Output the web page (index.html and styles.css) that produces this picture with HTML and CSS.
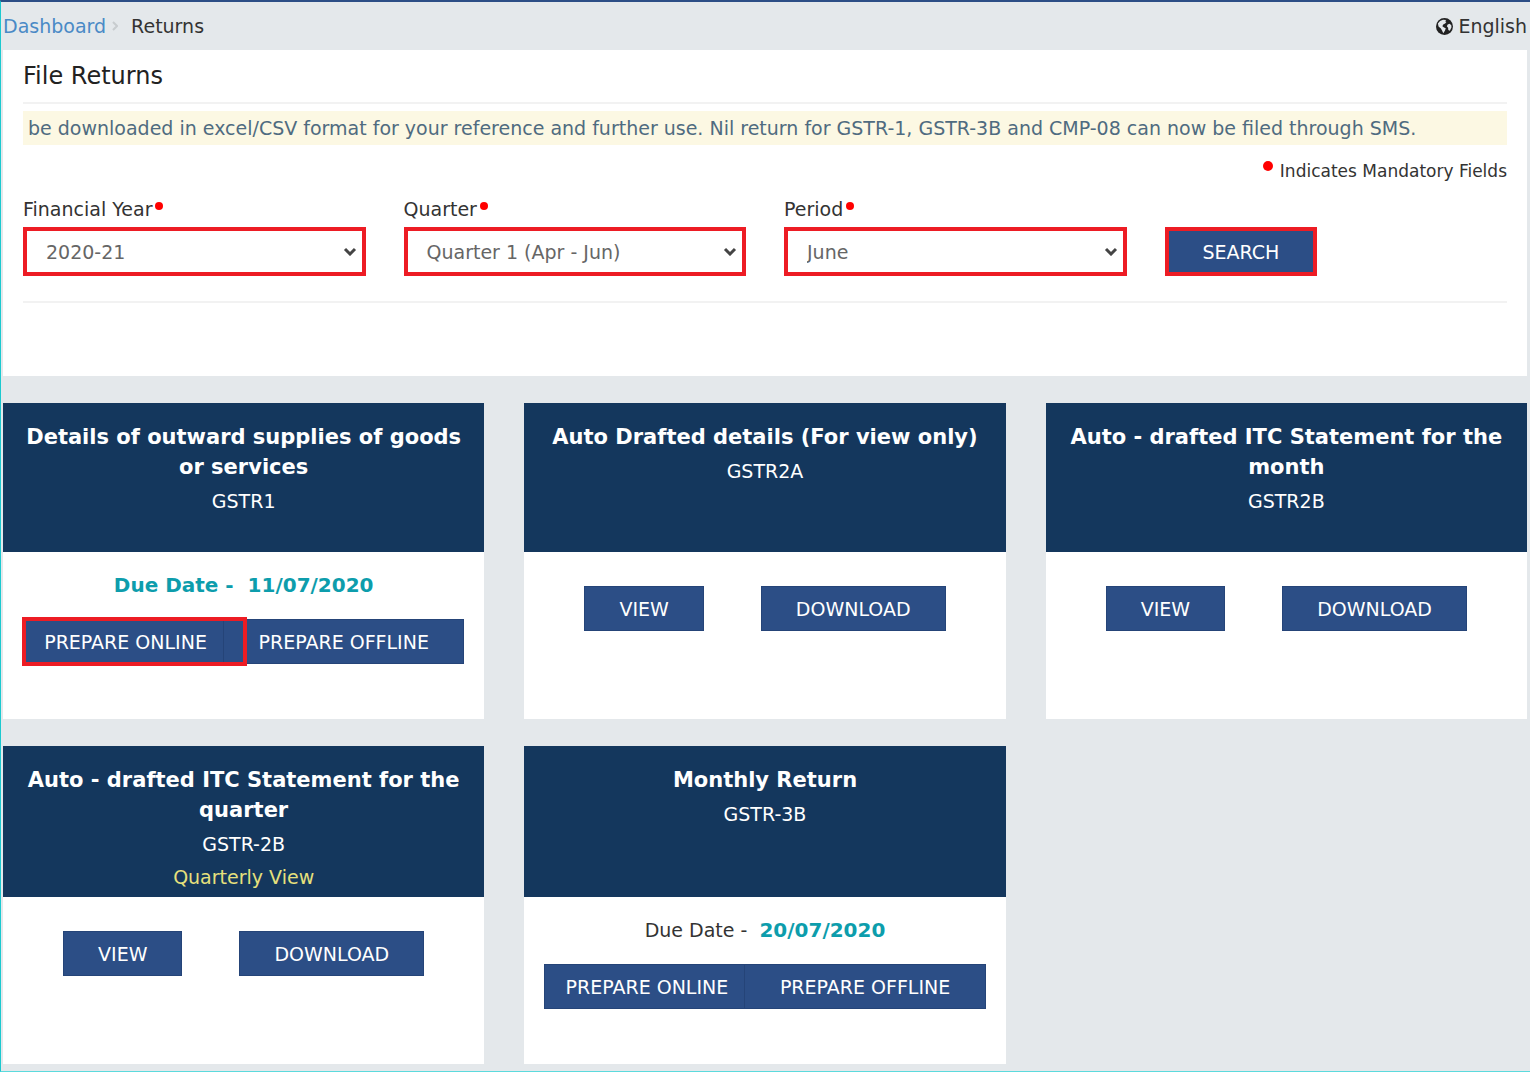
FILE: index.html
```html
<!DOCTYPE html>
<html lang="en">
<head>
<meta charset="utf-8">
<meta name="viewport" content="width=device-width, initial-scale=1">
<title>File Returns</title>
<link rel="stylesheet" href="styles.css">
</head>
<body>
<div class="page">
  <header class="topbar">
    <nav class="breadcrumb" aria-label="Breadcrumb">
      <a href="#">Dashboard</a>
      <svg class="crumb-sep" viewBox="0 0 6 10" aria-hidden="true"><path d="M1 1l4 4-4 4"/></svg>
      <span>Returns</span>
    </nav>
    <div class="language">
      <svg class="globe" viewBox="0 0 16 16" aria-hidden="true">
        <circle cx="8" cy="8" r="8" fill="#222"/>
        <path fill="#e4e8eb" d="M1.800 5.200Q3.400 2.200 6.600 1.600L9.600 1.800 8.600 3 9.800 3.800 8.600 5.200 6.800 6 6 7.800 7.600 9 9.200 9.600 8.400 12 6.800 14.400 5.800 12 4.600 9.800 2.400 8zM11 6.200l1.800-.8 1.600 1.400.2 2-1.600 3.200-1.400-.8-.2-2-1.200-1.400z"/>
      </svg>
      <span>English</span>
    </div>
  </header>

  <main>
    <section class="panel">
      <h1 class="panel-title">File Returns</h1>
      <p class="notice">be downloaded in excel/CSV format for your reference and further use. Nil return for GSTR-1, GSTR-3B and CMP-08 can now be filed through SMS.</p>
      <p class="mandatory"><span class="dot"></span>Indicates Mandatory Fields</p>
      <form class="filters">
        <div class="field">
          <label for="year">Financial Year<span class="dot"></span></label>
          <div class="select-box">
            <select id="year"><option>2020-21</option></select>
            <svg class="chevron" viewBox="0 0 14 9" aria-hidden="true"><path d="M2 2l5 5 5-5"/></svg>
          </div>
        </div>
        <div class="field">
          <label for="quarter">Quarter<span class="dot"></span></label>
          <div class="select-box">
            <select id="quarter"><option>Quarter 1 (Apr - Jun)</option></select>
            <svg class="chevron" viewBox="0 0 14 9" aria-hidden="true"><path d="M2 2l5 5 5-5"/></svg>
          </div>
        </div>
        <div class="field">
          <label for="period">Period<span class="dot"></span></label>
          <div class="select-box">
            <select id="period"><option>June</option></select>
            <svg class="chevron" viewBox="0 0 14 9" aria-hidden="true"><path d="M2 2l5 5 5-5"/></svg>
          </div>
        </div>
        <button class="btn search" type="button">SEARCH</button>
      </form>
    </section>

    <section class="cards">
      <article class="card">
        <header class="card-head">
          <h2>Details of outward supplies of goods or services</h2>
          <p>GSTR1</p>
        </header>
        <div class="card-body dated">
          <p class="due strong">Due Date - &nbsp;<b>11/07/2020</b></p>
          <div class="group marked">
            <button class="btn online" type="button">PREPARE ONLINE</button>
            <button class="btn offline" type="button">PREPARE OFFLINE</button>
          </div>
        </div>
      </article>
      <article class="card">
        <header class="card-head">
          <h2>Auto Drafted details (For view only)</h2>
          <p>GSTR2A</p>
        </header>
        <div class="card-body">
          <div class="pair">
            <button class="btn" type="button">VIEW</button>
            <button class="btn" type="button">DOWNLOAD</button>
          </div>
        </div>
      </article>
      <article class="card">
        <header class="card-head">
          <h2>Auto - drafted ITC Statement for the month</h2>
          <p>GSTR2B</p>
        </header>
        <div class="card-body">
          <div class="pair">
            <button class="btn" type="button">VIEW</button>
            <button class="btn" type="button">DOWNLOAD</button>
          </div>
        </div>
      </article>
      <article class="card">
        <header class="card-head">
          <h2>Auto - drafted ITC Statement for the quarter</h2>
          <p>GSTR-2B</p>
          <p class="quarterly">Quarterly View</p>
        </header>
        <div class="card-body">
          <div class="pair">
            <button class="btn" type="button">VIEW</button>
            <button class="btn" type="button">DOWNLOAD</button>
          </div>
        </div>
      </article>
      <article class="card">
        <header class="card-head">
          <h2>Monthly Return</h2>
          <p>GSTR-3B</p>
        </header>
        <div class="card-body dated">
          <p class="due">Due Date - &nbsp;<b>20/07/2020</b></p>
          <div class="group">
            <button class="btn online" type="button">PREPARE ONLINE</button>
            <button class="btn offline" type="button">PREPARE OFFLINE</button>
          </div>
        </div>
      </article>
    </section>
  </main>
</div>
</body>
</html>
```
FILE: styles.css
```css
*,
*::after {
  box-sizing: border-box;
}

body {
  margin: 0;
  background: #fff;
  color: #333;
  font-family: Verdana, "DejaVu Sans", sans-serif;
  font-size: 19px;
  line-height: 28px;
}

h1, h2, p {
  margin: 0;
}

.page {
  padding: 0 3px 7px 2px;
  background: #e4e8eb;
  border-top: 2px solid #2c4e86;
  border-left: 1px solid #1cc9cf;
  border-bottom: 1px solid #5cdadd;
}

.topbar {
  display: flex;
  justify-content: space-between;
  align-items: center;
  height: 48px;
}

.breadcrumb {
  display: flex;
  align-items: center;
}

.breadcrumb a {
  color: #4a8ac6;
  text-decoration: none;
}

.crumb-sep {
  width: 6px;
  height: 10px;
  margin: 0 13px 0 6px;
  fill: none;
  stroke: #c8cccf;
  stroke-width: 2;
}

.language {
  display: flex;
  align-items: center;
  gap: 5px;
}

.globe {
  width: 17px;
  height: 17px;
}

.panel {
  padding: 12px 20px 73px;
  background: #fff;
}

.panel-title {
  padding-bottom: 12px;
  border-bottom: 2px solid #f2f2f2;
  color: #222;
  font-size: 24px;
  font-weight: 400;
  line-height: 28px;
}

.notice {
  margin-top: 7px;
  padding: 3px 5px;
  overflow: hidden;
  background: #fcf8e3;
  color: #4f6b80;
  white-space: nowrap;
}

.mandatory {
  margin-top: 12px;
  font-size: 17px;
  text-align: right;
}

.dot {
  display: inline-block;
  width: 8px;
  height: 8px;
  margin-left: 3px;
  border-radius: 50%;
  background: #f00;
  vertical-align: 6px;
}

.mandatory .dot {
  width: 10px;
  height: 10px;
  margin-right: 7px;
}

.filters {
  display: grid;
  grid-template-columns: repeat(4, 1fr);
  gap: 38px;
  align-items: end;
  padding: 10px 0 25px;
  border-bottom: 2px solid #f2f2f2;
}

.field label {
  display: block;
  margin-bottom: 4px;
}

.select-box {
  display: grid;
  align-items: center;
}

.select-box > * {
  grid-area: 1 / 1;
}

select {
  width: 100%;
  height: 49px;
  padding: 0 19px;
  border: 4px solid #ed1c24;
  border-radius: 0;
  background: #fff;
  color: #666;
  font: inherit;
  appearance: none;
}

.chevron {
  justify-self: end;
  width: 14px;
  height: 9px;
  margin-right: 9px;
  fill: none;
  stroke: #444;
  stroke-width: 3;
  pointer-events: none;
}

.btn {
  height: 45px;
  padding: 0 34px;
  border: 1px solid #254478;
  background: #2c4e86;
  color: #fff;
  font: inherit;
}

.search {
  justify-self: start;
  height: 49px;
  border: 4px solid #ed1c24;
}

.cards {
  display: grid;
  grid-template-columns: repeat(3, 1fr);
  gap: 27px 40px;
  margin-top: 27px;
}

.card {
  display: flex;
  flex-direction: column;
  background: #fff;
}

.card-head {
  min-height: 149px;
  padding: 19px 20px 4px;
  background: #14375d;
  color: #fff;
  text-align: center;
}

.cards .card:nth-child(n + 4) .card-head {
  min-height: 151px;
}

.card-head h2 {
  margin-bottom: 5px;
  font-size: 21px;
  line-height: 30px;
}

.card-head .quarterly {
  margin-top: 5px;
  color: #e6e07c;
}

.card-body {
  min-height: 167px;
  padding: 34px 20px;
}

.card-body.dated {
  padding-top: 19px;
}

.due {
  margin-bottom: 20px;
  text-align: center;
}

.due b,
.due.strong {
  color: #0d9dac;
  font-size: 20px;
  font-weight: 700;
}

.pair {
  display: flex;
  justify-content: center;
  gap: 57px;
}

.group {
  position: relative;
  display: grid;
  grid-template-columns: 201fr 240fr;
}

.group .btn {
  padding: 0;
}

.group .online {
  padding-left: 4px;
}

.group .offline {
  border-left: 0;
}

/* Highlight frame laid over the first action */
.marked::after {
  content: "";
  position: absolute;
  top: -2px;
  bottom: -2px;
  left: -1px;
  width: 51%;
  border: 4px solid #ed1c24;
  pointer-events: none;
}
```
